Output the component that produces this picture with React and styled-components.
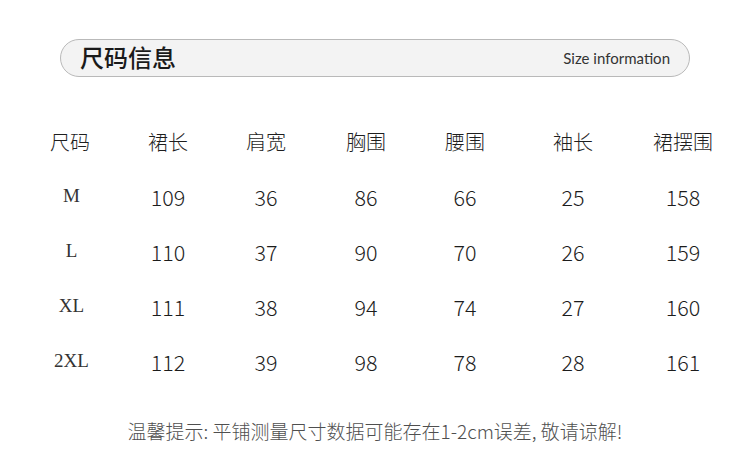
import styled, { createGlobalStyle } from "styled-components";

const GlobalStyle = createGlobalStyle`
  html, body {
    margin: 0;
    padding: 0;
    background: #ffffff;
  }
  body {
    font-family: "Noto Sans CJK SC", "Noto Sans", sans-serif;
  }
`;

const Page = styled.div`
  width: 750px;
  height: 455px;
  padding-top: 39px;
  box-sizing: border-box;
  background: #ffffff;
  overflow: hidden;
`;

const TitleBar = styled.div`
  margin: 0 60px;
  height: 38px;
  box-sizing: border-box;
  border: 1.5px solid #b9b9b9;
  border-radius: 19px;
  background: #f3f3f3;
  display: flex;
  align-items: center;
  justify-content: space-between;
  padding: 0 19px 0 19px;
`;

const Title = styled.h1`
  margin: 0 0 2px;
  font-family: "Noto Sans CJK SC", sans-serif;
  font-size: 24px;
  font-weight: 500;
  color: #1a1a1a;
  line-height: 1;
`;

const Subtitle = styled.span`
  font-family: Lato, "Open Sans", sans-serif;
  font-size: 15px;
  color: #333;
`;

const Table = styled.div`
  margin-top: 37px;
  margin-left: 20px;
  display: grid;
  grid-template-columns: 100px 96px 100px 100px 98px 118px 102px;
  grid-auto-rows: 55px;
  align-items: center;
  justify-items: center;
`;

const Head = styled.div`
  font-family: "Noto Sans CJK SC", sans-serif;
  font-size: 20px;
  font-weight: 300;
  color: #1e1e1e;
`;

const Size = styled.div`
  font-family: "Liberation Serif", serif;
  font-size: 19px;
  font-weight: 400;
  color: #333;
  margin-left: 3px;
  margin-top: -2px;
`;

const Value = styled.div`
  font-family: "Noto Sans CJK SC", "Noto Sans", sans-serif;
  font-size: 21.5px;
  font-weight: 300;
  color: #1c1c1c;
`;

const Note = styled.p`
  margin: 30px 0 0;
  text-align: center;
  font-family: "Noto Sans CJK SC", sans-serif;
  font-size: 19px;
  font-weight: 300;
  color: #4f4f4f;
  line-height: 24px;
`;

const headers = ["尺码", "裙长", "肩宽", "胸围", "腰围", "袖长", "裙摆围"];

const rows = [
  ["M", 109, 36, 86, 66, 25, 158],
  ["L", 110, 37, 90, 70, 26, 159],
  ["XL", 111, 38, 94, 74, 27, 160],
  ["2XL", 112, 39, 98, 78, 28, 161],
];

export default function App() {
  return (
    <Page>
      <GlobalStyle />
      <TitleBar>
        <Title>尺码信息</Title>
        <Subtitle>Size information</Subtitle>
      </TitleBar>
      <Table>
        {headers.map((h) => (
          <Head key={h}>{h}</Head>
        ))}
        {rows.map((r) =>
          r.map((cell, i) =>
            i === 0 ? (
              <Size key={r[0] + i}>{cell}</Size>
            ) : (
              <Value key={r[0] + i}>{cell}</Value>
            )
          )
        )}
      </Table>
      <Note>温馨提示: 平铺测量尺寸数据可能存在1-2cm误差, 敬请谅解!</Note>
    </Page>
  );
}
